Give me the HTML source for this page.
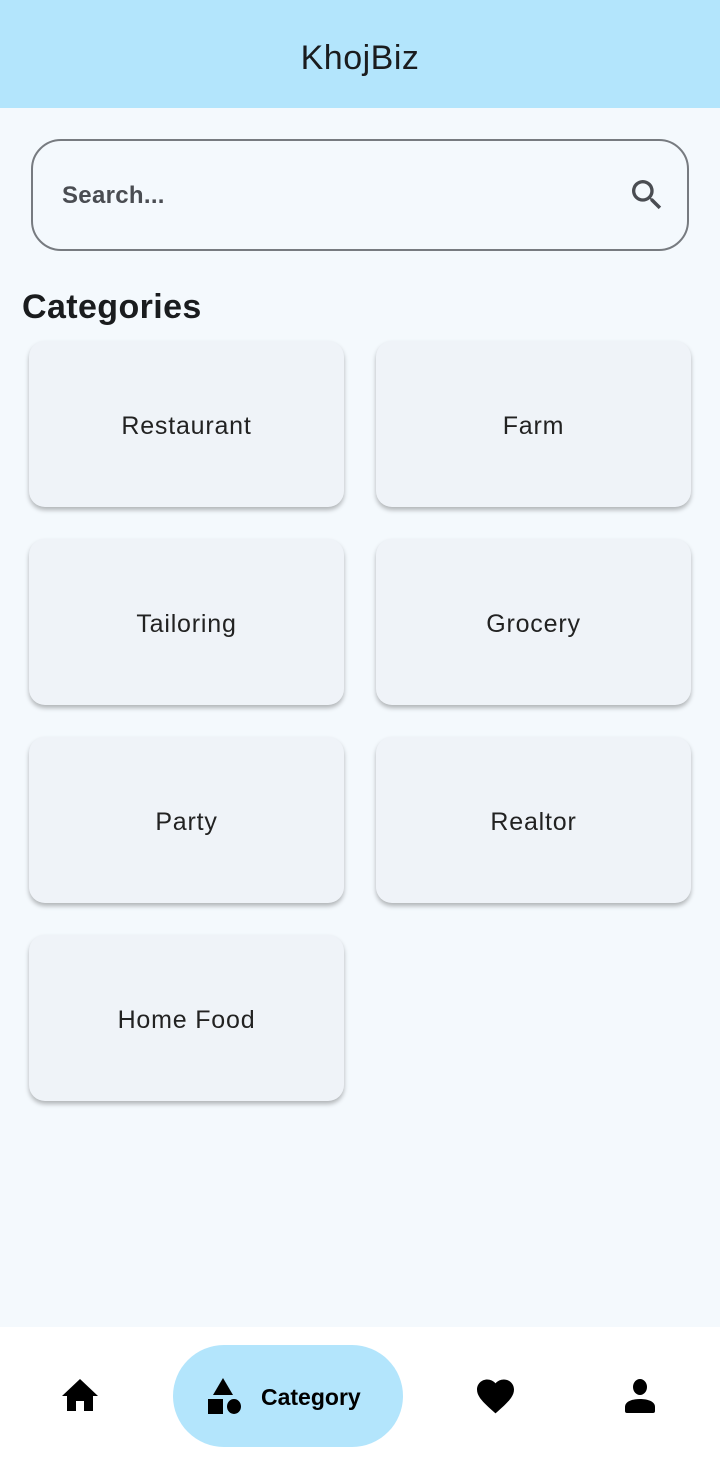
<!DOCTYPE html>
<html><head><style>
*{margin:0;padding:0;box-sizing:border-box}
body{width:720px;height:1467px;background:#f4f9fd;font-family:"Liberation Sans",sans-serif;position:relative;overflow:hidden;color:#1d1f22}
.hdr{position:absolute;left:0;top:0;width:720px;height:108px;background:#b3e5fc;text-align:center;line-height:116px;font-size:34px;color:#1a1c1e;letter-spacing:0.5px}
.search{position:absolute;left:31px;top:139px;width:658px;height:112px;border:2px solid #777b80;border-radius:30px}
.search span{position:absolute;left:29px;top:41px;font-size:24px;font-weight:bold;color:#4a4d52;letter-spacing:0.3px}
.search svg{position:absolute;right:20px;top:34px}
h2{position:absolute;left:22px;top:288px;font-size:34px;font-weight:bold;color:#1a1c1e;letter-spacing:0.4px}
.card{position:absolute;width:315px;height:166px;background:#eff3f8;border-radius:16px;box-shadow:0 3px 5px rgba(0,0,0,.28);text-align:center;line-height:170px;font-size:25px;color:#222;letter-spacing:0.8px}
.nav{position:absolute;left:0;top:1327px;width:720px;height:140px;background:#fff}
.pill{position:absolute;left:173px;top:18px;width:230px;height:102px;border-radius:51px;background:#b3e5fc}
.pill b{position:absolute;left:88px;top:39px;font-size:23px;color:#000}
</style></head><body>
<div class="hdr">KhojBiz</div>
<div class="search"><span>Search...</span>
<svg width="40" height="40" viewBox="0 0 24 24"><path fill="#4a4d52" d="M15.5 14h-.79l-.28-.27A6.47 6.47 0 0 0 16 9.5 6.5 6.5 0 1 0 9.5 16c1.61 0 3.09-.59 4.230-1.57l.27.28v.79l5 4.99L20.49 19l-4.99-5zm-6 0C7.01 14 5 11.99 5 9.5S7.01 5 9.5 5 14 7.01 14 9.5 11.990 14 9.5 14z"/></svg></div>
<h2>Categories</h2>
<div class="card" style="left:29px;top:341px">Restaurant</div>
<div class="card" style="left:376px;top:341px">Farm</div>
<div class="card" style="left:29px;top:539px">Tailoring</div>
<div class="card" style="left:376px;top:539px">Grocery</div>
<div class="card" style="left:29px;top:737px">Party</div>
<div class="card" style="left:376px;top:737px">Realtor</div>
<div class="card" style="left:29px;top:935px">Home Food</div>
<div class="nav">
<svg style="position:absolute;left:62px;top:52px" width="36" height="32" viewBox="0 0 36 32"><path d="M18 0L0 17h5v15h9V22h8v10h9V17h5z"/></svg>
<div class="pill">
<svg style="position:absolute;left:33px;top:33px" width="38" height="38" viewBox="0 0 38 38"><path d="M17 0L7 17h20z"/><rect x="2" y="21" width="15" height="15"/><ellipse cx="28" cy="28.5" rx="7" ry="7.5"/></svg>
<b>Category</b></div>
<svg style="position:absolute;left:477px;top:52px" width="37" height="35" viewBox="2 3 20 18.4"><path d="M12 21.35l-1.45-1.32C5.4 15.36 2 12.28 2 8.5 2 5.42 4.42 3 7.5 3c1.74 0 3.41.81 4.5 2.09C13.09 3.81 14.76 3 16.5 3 19.58 3 22 5.42 22 8.5c0 3.78-3.4 6.86-8.55 11.54z"/></svg>
<svg style="position:absolute;left:625px;top:52px" width="30" height="34" viewBox="0 0 30 34"><ellipse cx="15" cy="8" rx="7" ry="8"/><path d="M0 28c0-6 8-8 15-8s15 2 15 8v4a2 2 0 0 1-2 2H2a2 2 0 0 1-2-2z"/></svg>
</div>
</body></html>
